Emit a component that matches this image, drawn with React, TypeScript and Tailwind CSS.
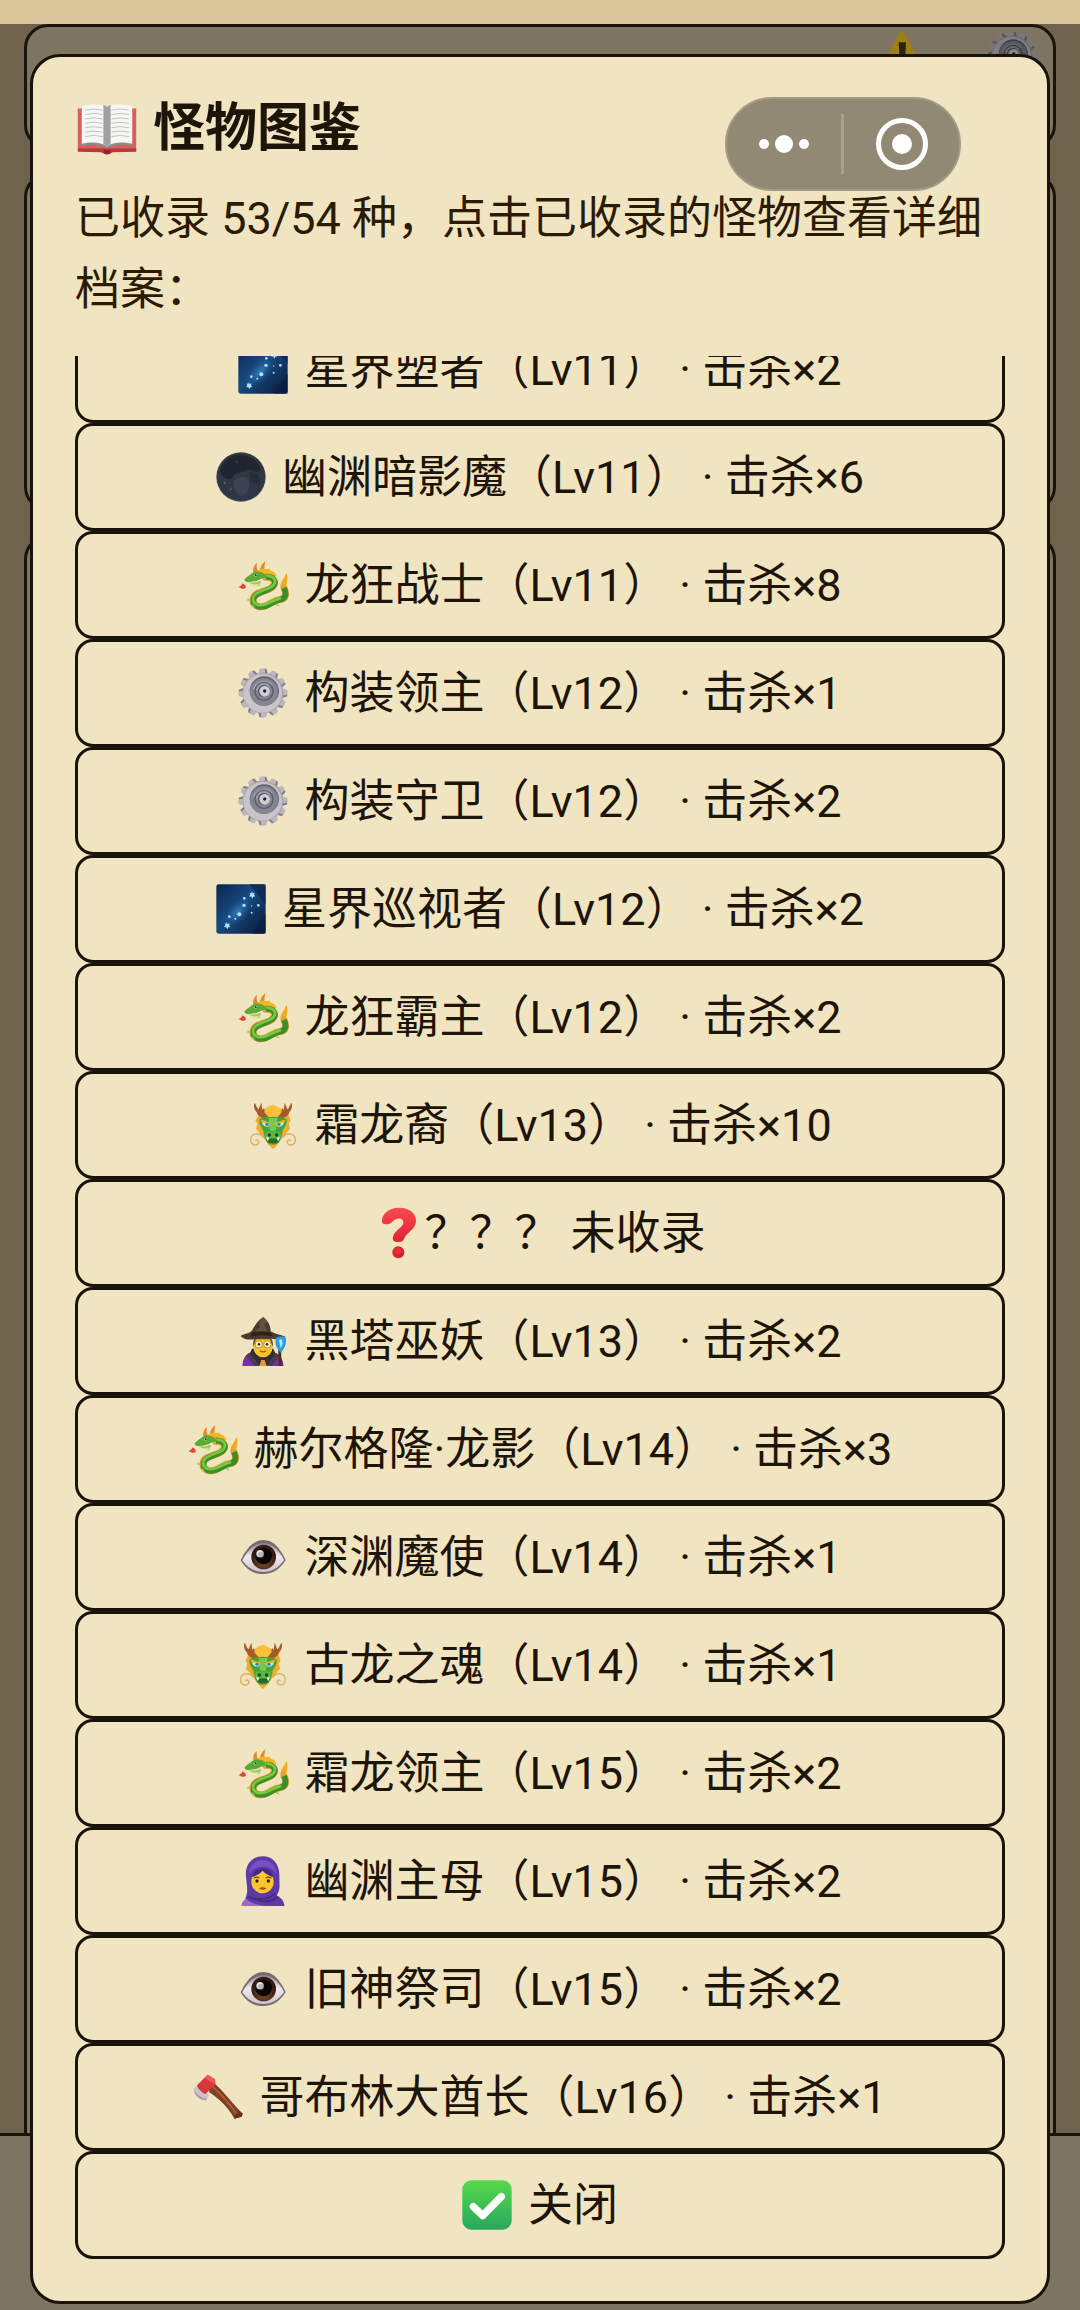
import React from "react";
import { clsx } from "clsx";

type IconName =
  | "galaxy"
  | "moon"
  | "dragon"
  | "gear"
  | "dragonFace"
  | "question"
  | "mage"
  | "eye"
  | "hijab"
  | "axe"
  | "check"
  | "book"
  | "warning";

interface Monster {
  icon: IconName;
  label: string;
}

const monsters: Monster[] = [
  { icon: "galaxy", label: "星界塑者（Lv11） · 击杀×2" },
  { icon: "moon", label: "幽渊暗影魔（Lv11） · 击杀×6" },
  { icon: "dragon", label: "龙狂战士（Lv11） · 击杀×8" },
  { icon: "gear", label: "构装领主（Lv12） · 击杀×1" },
  { icon: "gear", label: "构装守卫（Lv12） · 击杀×2" },
  { icon: "galaxy", label: "星界巡视者（Lv12） · 击杀×2" },
  { icon: "dragon", label: "龙狂霸主（Lv12） · 击杀×2" },
  { icon: "dragonFace", label: "霜龙裔（Lv13） · 击杀×10" },
  { icon: "question", label: "？？？ 未收录" },
  { icon: "mage", label: "黑塔巫妖（Lv13） · 击杀×2" },
  { icon: "dragon", label: "赫尔格隆·龙影（Lv14） · 击杀×3" },
  { icon: "eye", label: "深渊魔使（Lv14） · 击杀×1" },
  { icon: "dragonFace", label: "古龙之魂（Lv14） · 击杀×1" },
  { icon: "dragon", label: "霜龙领主（Lv15） · 击杀×2" },
  { icon: "hijab", label: "幽渊主母（Lv15） · 击杀×2" },
  { icon: "eye", label: "旧神祭司（Lv15） · 击杀×2" },
  { icon: "axe", label: "哥布林大酋长（Lv16） · 击杀×1" },
];

const gearTeeth = Array.from({ length: 12 }, (_, i) => i * 30);

// All drawings share a 150 x 150 grid
const drawings: Record<IconName, React.ReactNode> = {
  galaxy: (
    <>
      <defs>
        <linearGradient id="sky" x1="0" y1="0" x2="1" y2="1">
          <stop offset="0" stopColor="#0c2650" />
          <stop offset="0.45" stopColor="#184a82" />
          <stop offset="1" stopColor="#081733" />
        </linearGradient>
        <radialGradient id="glow">
          <stop offset="0" stopColor="#3f90cc" stopOpacity="0.8" />
          <stop offset="1" stopColor="#1c5591" stopOpacity="0" />
        </radialGradient>
      </defs>
      <rect x="1" y="1" width="148" height="148" rx="7" fill="url(#sky)" />
      <path d="M100 1H149V149H110L149 90V60Z" fill="#0b1d40" opacity="0.6" />
      <ellipse cx="66" cy="84" rx="62" ry="30" fill="url(#glow)" transform="rotate(-48 66 84)" />
      <g fill="#a9e4fb">
        <path d="M107 22l3 6 6-2-2 6 4 5-6 1-3 6-3-6-7-1 4-5-2-6 5 2z" />
        <path d="M32 114l3 6 6-2-2 6 4 5-6 1-3 6-3-6-7-1 4-5-2-6 5 2z" />
        <circle cx="85" cy="43" r="4" />
        <circle cx="84" cy="64" r="5" />
        <circle cx="70" cy="91" r="6" />
        <circle cx="40" cy="98" r="4" />
        <circle cx="127" cy="64" r="4" />
        <circle cx="107" cy="86" r="3" />
        <circle cx="107" cy="66" r="2" />
        <circle cx="58" cy="104" r="3" />
      </g>
    </>
  ),
  moon: (
    <>
      <circle cx="75" cy="75" r="74" fill="#454b5b" />
      <circle cx="75" cy="74" r="72" fill="#303644" />
      <path d="M12 55C22 18 56 4 84 10C112 14 132 36 134 56C116 66 106 48 90 54C76 66 56 58 50 76C40 86 16 80 12 55Z" fill="#20252f" />
      <path d="M60 82C84 66 104 78 100 102C94 134 72 138 62 122C52 110 48 92 60 82Z" fill="#3b4252" />
      <path d="M100 60C122 60 136 76 130 92C118 98 102 88 100 60Z" fill="#262b36" />
      <circle cx="26" cy="92" r="3" fill="#626a7b" />
      <circle cx="44" cy="112" r="3" fill="#555d6e" />
      <circle cx="62" cy="30" r="4" fill="#323846" />
    </>
  ),
  dragon: (
    <>
      <path d="M46 36C44 24 50 14 56 8C56 20 56 28 60 34ZM66 32C66 20 74 10 82 3C80 16 78 24 80 34Z" fill="#e38a26" />
      <path d="M56 34C74 20 84 30 96 26C94 34 110 30 116 48C104 46 118 56 114 64L82 62Z" fill="#f7b322" />
      <path d="M132 86C120 72 136 62 146 38C151 58 147 70 140 86Z" fill="#f4a91f" />
      <path
        d="M84 52C106 50 116 66 104 80C92 94 52 94 46 114C40 136 62 146 84 137C104 128 108 121 124 119C146 116 146 100 138 84"
        fill="none"
        stroke="#e9a132"
        strokeWidth="21"
        strokeLinecap="round"
      />
      <path
        d="M84 50C108 50 117 66 106 79C94 94 54 94 47 115C42 136 62 146 84 138C104 130 110 122 126 119C144 115 146 102 138 84"
        fill="none"
        stroke="#3f8d28"
        strokeWidth="17"
      />
      <path
        d="M88 47C112 50 116 64 106 76C94 90 54 90 46 112C42 132 62 140 82 133C102 126 110 118 126 115"
        fill="none"
        stroke="#78c93f"
        strokeWidth="8"
        strokeLinecap="round"
      />
      <path d="M20 58C30 46 40 44 50 34C64 32 82 38 88 52C76 56 68 56 62 60C52 66 42 64 34 67C24 66 19 63 20 58Z" fill="#58ac35" />
      <path d="M34 68C44 66 54 70 66 62L70 68C58 76 44 74 34 68Z" fill="#9bcb4a" />
      <path d="M46 46l12-4-4 9z" fill="#fff4b5" />
      <circle cx="53" cy="46" r="3" fill="#222" />
      <path d="M2 82L10 76L14 70L22 76L24 84L14 87Z" fill="#df4b31" />
      <path d="M26 122l12 0-8-8M66 72l-10 4 10 2M126 140l-14-4 6-6M52 144l-10-4 2-8" fill="#a4cc61" />
    </>
  ),
  gear: (
    <>
      {gearTeeth.map((angle) => (
        <g key={angle} transform={`rotate(${angle} 75 75)`}>
          <path d="M60 22L65 3Q75-2 85 3L91 22Z" fill="#bbb7bc" />
          <path d="M80 3Q85 1 86 5L91 22L83 22Z" fill="#827d87" />
        </g>
      ))}
      <circle cx="75" cy="75" r="61" fill="#a7a4ab" />
      <circle cx="74" cy="76" r="58" fill="#c8c4ca" />
      <circle cx="79" cy="69" r="44" fill="#62626e" />
      <circle cx="78" cy="72" r="42" fill="#858591" />
      <path d="M44 64A36 36 0 0 1 104 48L92 60A22 22 0 0 0 60 68Z" fill="#a0a0ab" />
      <circle cx="78" cy="70" r="27" fill="none" stroke="#5c5c68" strokeWidth="4" />
      <circle cx="78" cy="69" r="18" fill="#54545f" />
      <circle cx="80" cy="70" r="16" fill="#d1cfd5" />
      <circle cx="80" cy="69" r="5" fill="#26242b" />
    </>
  ),
  dragonFace: (
    <>
      <path d="M75 18L88 22L108 30L122 46L128 62L122 70L126 86L116 98L104 112L88 134L75 148L62 134L46 112L34 98L24 86L28 70L22 62L32 44L46 28Z" fill="#f2ab2c" />
      <path d="M75 14L92 22L104 42L96 58H54L46 42L58 20Z" fill="#f7c13b" />
      <path d="M56 56C42 56 28 48 26 36C18 28 16 14 20 8C25 16 26 24 32 28L40 8L43 30L48 24L50 38L62 52ZM94 56C108 56 122 48 124 36C132 28 134 14 130 8C125 16 124 24 118 28L110 8L107 30L102 24L100 38L88 52Z" fill="#a55b28" />
      <path d="M34 58C48 48 60 52 75 50C90 52 102 48 116 58C118 72 110 82 104 92C100 122 92 134 75 134C58 134 50 122 46 92C40 82 32 72 34 58Z" fill="#46a53a" />
      <path d="M62 54H88L84 92H66Z" fill="#78c850" />
      <path d="M42 66L67 72L60 80C50 80 44 76 42 66ZM108 66L83 72L90 80C100 80 106 76 108 66Z" fill="#d7eef0" />
      <path d="M36 58L68 68L66 74L42 67ZM114 58L82 68L84 74L108 67Z" fill="#f4b22d" />
      <circle cx="57" cy="73" r="5" fill="#2289b3" />
      <circle cx="93" cy="73" r="5" fill="#2289b3" />
      <path d="M50 104C52 90 66 96 75 94C84 96 98 90 100 104L96 118H54Z" fill="#5cb642" />
      <path d="M54 112C62 117 88 117 96 112L92 126C84 131 66 131 58 126Z" fill="#2a6a29" />
      <circle cx="64" cy="105" r="5" fill="#194d1c" />
      <circle cx="86" cy="105" r="5" fill="#194d1c" />
      <path d="M54 110l5 14 5-10zM96 110l-5 14-5-10z" fill="#fff" />
      <path d="M46 112C32 94 8 100 8 120C8 136 28 140 32 128C34 122 28 118 23 121M104 112C118 94 142 100 142 120C142 136 122 140 118 128C116 122 122 118 127 121" fill="none" stroke="#dcae62" strokeWidth="4" strokeLinecap="round" />
    </>
  ),
  question: (
    <>
      <defs>
        <linearGradient id="redMark" x1="0" y1="0" x2="0" y2="1">
          <stop offset="0" stopColor="#fb4a50" />
          <stop offset="1" stopColor="#dc2430" />
        </linearGradient>
      </defs>
      <path
        d="M24 42C22 20 42 -1 76 -1C106 -1 127 16 126 40C125 64 98 74 91 91C88 102 80 103 69 102C58 101 55 94 57 86C63 66 86 58 88 45C89 36 82 31 72 32C58 33 56 44 46 47C36 50 25 49 24 42Z"
        fill="url(#redMark)"
      />
      <circle cx="73" cy="133" r="18" fill="#d91f2a" />
      <circle cx="71" cy="128" r="12" fill="#e52e38" />
    </>
  ),
  mage: (
    <>
      <path d="M14 150C16 124 24 112 42 108L75 126L104 108C126 112 134 128 136 150Z" fill="#4b3b52" />
      <path d="M14 150C14 130 20 124 26 122L50 150ZM102 150L124 124C134 132 136 140 136 150Z" fill="#7d2eac" />
      <path d="M42 98L36 112L66 150L75 134L86 150L112 112L106 98Z" fill="#332b38" />
      <path d="M120 78L128 78L131 150H122Z" fill="#4b2c1c" />
      <ellipse cx="75" cy="92" rx="29" ry="32" fill="#f6c12e" />
      <path d="M46 92C42 70 54 58 75 58C96 58 108 70 104 92L96 70H54Z" fill="#6d431c" />
      <g fill="#fff2bf" stroke="#c48c24" strokeWidth="3">
        <circle cx="62" cy="85" r="11" />
        <circle cx="88" cy="85" r="11" />
      </g>
      <circle cx="63" cy="85" r="4" fill="#3a2412" />
      <circle cx="87" cy="85" r="4" fill="#3a2412" />
      <path d="M66 104Q75 111 84 104" stroke="#a1571a" strokeWidth="4" fill="none" />
      <path d="M8 60C20 52 32 54 40 46C48 34 58 12 76 3C86 12 98 24 98 46C112 54 126 56 142 62C126 78 106 66 76 67C46 68 24 78 8 60Z" fill="#4c3b2b" />
      <path d="M62 22L76 3L90 18L78 24L88 46H52L66 34Z" fill="#65523e" />
      <path d="M42 50C62 46 84 46 98 50L104 61C84 57 58 57 38 62Z" fill="#2a2119" />
      <path d="M113 72C109 62 135 58 144 66C146 86 139 98 129 110C118 100 110 88 113 72Z" fill="#27a3e3" />
      <path d="M123 72l8-3 3 14-6 14z" fill="#b4ebff" />
      <path d="M70 132l10 0 6 18H64z" fill="#e59a31" />
    </>
  ),
  eye: (
    <>
      <defs>
        <radialGradient id="iris" cx="0.5" cy="0.7">
          <stop offset="0" stopColor="#8b5030" />
          <stop offset="1" stopColor="#351a10" />
        </radialGradient>
        <linearGradient id="eyeWhite" x1="0" y1="0" x2="0" y2="1">
          <stop offset="0" stopColor="#8f868f" />
          <stop offset="0.45" stopColor="#f0ebef" />
          <stop offset="1" stopColor="#cdc4cb" />
        </linearGradient>
      </defs>
      <path d="M8 85C24 52 44 25 76 24C108 24 126 50 143 84C126 112 104 126 76 126C46 126 24 112 8 85Z" fill="#746b73" />
      <path d="M13 85C28 58 46 35 76 34C106 34 124 57 138 84C122 107 102 120 76 120C48 120 28 107 13 85Z" fill="url(#eyeWhite)" />
      <circle cx="77" cy="75" r="37" fill="url(#iris)" />
      <circle cx="77" cy="72" r="25" fill="#080606" />
      <circle cx="66" cy="65" r="11" fill="#e8e6ea" />
      <circle cx="69" cy="68" r="9" fill="#8b878c" opacity="0.5" />
    </>
  ),
  hijab: (
    <>
      <path d="M10 150C12 132 28 124 42 118L76 110L112 118C128 124 138 132 139 150Z" fill="#9c6acb" />
      <path d="M24 62C20 24 44 1 74 1C104 1 126 24 124 62C124 84 128 104 116 118C130 126 138 138 139 150H88C58 148 34 140 22 126C32 110 26 84 24 62Z" fill="#5e3aa8" />
      <path d="M32 56C34 28 52 12 74 12C98 12 114 30 116 56C104 36 92 32 74 32C54 32 42 40 32 56Z" fill="#7650c4" />
      <path d="M40 78C40 52 56 40 73 39C92 40 107 54 107 78C107 98 90 112 74 112C58 112 40 98 40 78Z" fill="#fac72e" />
      <path d="M42 64C54 58 66 54 74 44C82 54 94 58 105 64C102 46 90 38 74 37C58 38 46 46 42 64Z" fill="#442781" />
      <path d="M48 67Q56 60 64 66M84 66Q92 60 100 67" stroke="#6e4318" strokeWidth="4" fill="none" />
      <circle cx="57" cy="75" r="5" fill="#36200f" />
      <circle cx="91" cy="75" r="5" fill="#36200f" />
      <path d="M63 97Q74 91 85 97Q74 106 63 97Z" fill="#a94e24" />
      <path d="M30 122C54 134 92 132 112 112M58 132C78 140 104 136 118 124" stroke="#442781" strokeWidth="5" fill="none" />
    </>
  ),
  axe: (
    <>
      <path d="M2 49L14 40L48 70L42 80C26 82 6 70 2 49Z" fill="#c8c4c8" />
      <path d="M2 49C6 64 22 78 42 80L40 85C18 84 3 70 2 49Z" fill="#a19da2" />
      <path d="M52 44L66 36C92 58 118 94 149 125L146 134L124 140C108 108 80 82 48 60Z" fill="#7d4022" />
      <path d="M60 46C88 68 112 100 134 130" stroke="#a85f35" strokeWidth="6" fill="none" />
      <path d="M124 140L146 134L149 125L139 116L128 126Z" fill="#693319" />
      <path d="M12 40L44 8L66 22L68 40L46 58L37 67C27 62 16 52 12 40Z" fill="#d63839" />
      <path d="M44 8L66 22L64 36L36 18Z" fill="#ef5b56" />
    </>
  ),
  check: (
    <>
      <defs>
        <linearGradient id="green" x1="0" y1="0" x2="0" y2="1">
          <stop offset="0" stopColor="#56d84b" />
          <stop offset="1" stopColor="#27a85d" />
        </linearGradient>
      </defs>
      <rect x="1" y="1" width="148" height="148" rx="27" fill="url(#green)" />
      <path d="M34 80L62 107L118 50" fill="none" stroke="#fff" strokeWidth="22" strokeLinejoin="round" strokeLinecap="round" />
    </>
  ),
  book: (
    <>
      <path d="M2 24H148V130L92 131Q75 140 58 131L2 130Z" fill="#d9605a" />
      <path d="M2 124H148V132L90 133Q75 142 60 133L2 132Z" fill="#b13c3c" />
      <path d="M12 22C38 14 62 14 75 22C88 14 112 14 138 22V118C112 112 90 114 75 124C60 114 38 112 12 118Z" fill="#8d8d8d" />
      <path d="M12 18C38 12 62 12 75 20C88 12 112 12 138 18V112C112 106 90 108 75 118C60 108 38 106 12 112Z" fill="#f6f6f4" />
      <path d="M66 15Q73 16 75 20Q77 16 84 15V112L75 118L66 112Z" fill="#a0a0a0" />
      <path
        d="M20 28Q42 22 64 28M20 39Q42 33 64 39M20 50Q42 44 64 50M20 61Q42 55 64 61M20 72Q42 66 64 72M20 83Q42 77 64 83M20 94Q42 88 64 94M86 28Q108 22 130 28M86 39Q108 33 130 39M86 50Q108 44 130 50M86 61Q108 55 130 61M86 72Q108 66 130 72M86 83Q108 77 130 83M86 94Q108 88 130 94"
        stroke="#b5b5b5"
        strokeWidth="2"
        fill="none"
      />
      <path d="M67 126Q75 130 83 126V136Q75 141 67 136Z" fill="#8f2326" />
    </>
  ),
  warning: (
    <>
      <path d="M75 2Q81 2 86 11L147 128Q152 144 138 146H12Q-2 144 3 128L64 11Q69 2 75 2Z" fill="#f2c321" />
      <path d="M65 34H87L83 104H69Z" fill="#3b3627" />
      <circle cx="75" cy="123" r="10" fill="#3b3627" />
    </>
  ),
};

const Icon: React.FC<{ name: IconName; className?: string }> = ({
  name,
  className,
}) => (
  <svg
    viewBox="0 0 150 150"
    aria-hidden="true"
    className={clsx("shrink-0 overflow-visible", className ?? "size-[50px]")}
  >
    {drawings[name]}
  </svg>
);

const RowButton: React.FC<Monster> = ({ icon, label }) => (
  <button
    type="button"
    className={clsx(
      "flex h-[108px] w-full shrink-0 cursor-pointer items-center justify-center rounded-[18px] border-3 border-[#1a130a] whitespace-pre",
      icon === "question" ? "gap-0" : "gap-4"
    )}
  >
    <Icon name={icon} />
    <span>{label}</span>
  </button>
);

const Backdrop = () => (
  <div className="flex h-full flex-col" aria-hidden="true">
    <div className="h-6 bg-[#dbc79a]" />
    <div className="flex flex-1 flex-col gap-6 px-6">
      <div className="flex h-[125px] justify-end gap-[60px] rounded-3xl border-3 border-[#1a130a] bg-[#7d7462] px-4 pt-1">
        <Icon name="warning" className="size-[50px] brightness-[0.65]" />
        <Icon name="gear" className="size-[50px] brightness-[0.65]" />
      </div>
      <div className="h-[338px] rounded-3xl border-3 border-[#1a130a] bg-[#7d7462]" />
      <div className="flex-1 rounded-t-3xl border-3 border-b-0 border-[#1a130a] bg-[#7d7462]" />
    </div>
    <div className="h-[177px] border-t-3 border-[#1a130a] bg-[#7d7462]" />
  </div>
);

const Capsule = () => (
  <div className="absolute top-[97px] right-[119px] flex h-[94px] w-[236px] items-center rounded-full border-2 border-[#a29b86] bg-[#918973]">
    <button
      type="button"
      aria-label="更多"
      className="flex h-full w-[114px] cursor-pointer items-center justify-center gap-1.5"
    >
      <span className="size-2.5 rounded-full bg-white" />
      <span className="size-[18px] rounded-full bg-white" />
      <span className="size-2.5 rounded-full bg-white" />
    </button>
    <span className="h-[60px] w-[3px] bg-[#a8a18d]" />
    <button
      type="button"
      aria-label="关闭小程序"
      className="flex h-full flex-1 cursor-pointer items-center justify-center"
    >
      <span className="flex size-[52px] items-center justify-center rounded-full border-5 border-white">
        <span className="size-5 rounded-full bg-white" />
      </span>
    </button>
  </div>
);

export default function App() {
  return (
    <div className="relative h-screen overflow-hidden bg-[#6f634d] font-['Roboto','Noto_Sans_CJK_SC',sans-serif] text-[45px] leading-[71px] text-[#1e150a]">
      <Backdrop />

      <section
        role="dialog"
        aria-labelledby="codex-title"
        className="absolute inset-x-[30px] top-[54px] bottom-1.5 flex flex-col rounded-[30px] border-3 border-[#1a130a] bg-[#f1e4c1] p-[42px]"
      >
        <h1
          id="codex-title"
          className="flex items-center gap-4 text-[52px] leading-[60px] font-bold"
        >
          <Icon name="book" className="ml-0.5 size-[60px]" />
          怪物图鉴
        </h1>
        <p className="mt-6 mb-[31px] text-[#2b1b05]">
          已收录 53/54 种，点击已收录的怪物查看详细档案：
        </p>

        {/* Scrolled to the end, so the first visible entry is cut off */}
        <div className="flex min-h-0 flex-1 flex-col justify-end overflow-hidden">
          {monsters.map((monster) => (
            <RowButton key={monster.label} {...monster} />
          ))}
        </div>
        <RowButton icon="check" label="关闭" />
      </section>

      <Capsule />
    </div>
  );
}
